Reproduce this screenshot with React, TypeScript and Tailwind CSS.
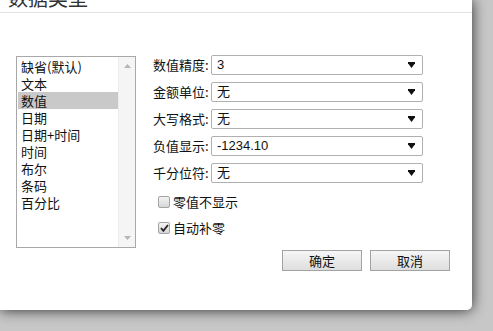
import React from 'react';

const font = { fontFamily: '"Microsoft YaHei", "Noto Sans CJK SC", sans-serif' };

const types = ['缺省(默认)', '文本', '数值', '日期', '日期+时间', '时间', '布尔', '条码', '百分比'];

const fields = [
  { label: '数值精度', value: '3' },
  { label: '金额单位', value: '无' },
  { label: '大写格式', value: '无' },
  { label: '负值显示', value: '-1234.10' },
  { label: '千分位符', value: '无' },
];

const Arrow = () => (
  <svg width="7" height="6" viewBox="0 0 7 6" className="shrink-0">
    <polygon points="0,0 7,0 7,1.2 3.5,6 0,1.2" fill="#111" />
  </svg>
);

const Checkbox = ({ checked, label }: { checked?: boolean; label: string }) => (
  <label className="flex items-center gap-[3px] h-[16px]">
    <span className="w-[12px] h-[12px] rounded-[2px] border border-[#a4a4a4] bg-gradient-to-b from-[#f4f4f4] to-[#d6d6d6] flex items-center justify-center">
      {checked && (
        <svg width="9" height="8" viewBox="0 0 9 8">
          <path d="M1 4.2 L3.4 6.8 L8 1" stroke="#222" strokeWidth="1.8" fill="none" />
        </svg>
      )}
    </span>
    <span className="text-[13px] leading-[16px] text-[#111]">{label}</span>
  </label>
);

export default function App() {
  return (
    <div className="w-[493px] h-[331px] bg-[#c7c7c7] overflow-hidden" style={font}>
      <div className="w-[472px] h-[310px] bg-white rounded-br-[5px] shadow-[0_0_14px_rgba(0,0,0,0.8)] flex flex-col">
        {/* Title */}
        <div className="h-[13px] border-b border-[#e2e2e2] overflow-hidden">
          <div className="-mt-[12px] pl-[8px] text-[20px] leading-[20px] text-[#333]">数据类型</div>
        </div>

        <div className="flex pl-[16px] pt-[43px]">
          {/* Type list */}
          <div className="w-[120px] h-[192px] border border-[#a8a8a8] flex shrink-0">
            <div className="flex-1 pt-[1px] pl-[1px]">
              {types.map((t, i) => (
                <div
                  key={t}
                  className={`h-[17px] leading-[17px] text-[13px] pl-[3px] text-[#111] overflow-hidden ${i === 2 ? 'bg-[#c9c9c9]' : ''}`}
                >
                  {t}
                </div>
              ))}
            </div>
            <div className="w-[17px] bg-[#f5f5f5] border-l border-[#ececec] flex flex-col items-center justify-between py-[7px]">
              <svg width="7" height="4" viewBox="0 0 7 4">
                <polygon points="3.5,0 7,4 0,4" fill="#b5b5b5" />
              </svg>
              <svg width="7" height="4" viewBox="0 0 7 4">
                <polygon points="0,0 7,0 3.5,4" fill="#b5b5b5" />
              </svg>
            </div>
          </div>

          {/* Options */}
          <div className="ml-[17px] w-[297px] flex flex-col">
            <div className="-mt-[1px] flex flex-col gap-[7px]">
              {fields.map((f) => (
                <div key={f.label} className="flex items-center">
                  <span className="w-[58px] text-[13px] text-[#111]">{f.label}:</span>
                  <div className="w-[212px] h-[20px] border border-[#b0b0b0] rounded-[2px] flex items-center justify-between pl-[5px] pr-[7px]">
                    <span
                      className="text-[13px] text-[#111]"
                      style={{ fontFamily: '"Liberation Sans", "Noto Sans CJK SC", sans-serif' }}
                    >
                      {f.value}
                    </span>
                    <Arrow />
                  </div>
                </div>
              ))}
            </div>

            <div className="pl-[5px] mt-[11px] flex flex-col gap-[10px]">
              <Checkbox label="零值不显示" />
              <Checkbox checked label="自动补零" />
            </div>

            <div className="flex justify-end gap-[8px] mt-[14px]">
              {['确定', '取消'].map((b) => (
                <button
                  key={b}
                  className="w-[80px] h-[21px] border border-[#a3a3a3] bg-gradient-to-b from-[#f6f6f6] to-[#dedede] text-[13px] leading-[19px] text-[#111]"
                >
                  {b}
                </button>
              ))}
            </div>
          </div>
        </div>
      </div>
    </div>
  );
}
